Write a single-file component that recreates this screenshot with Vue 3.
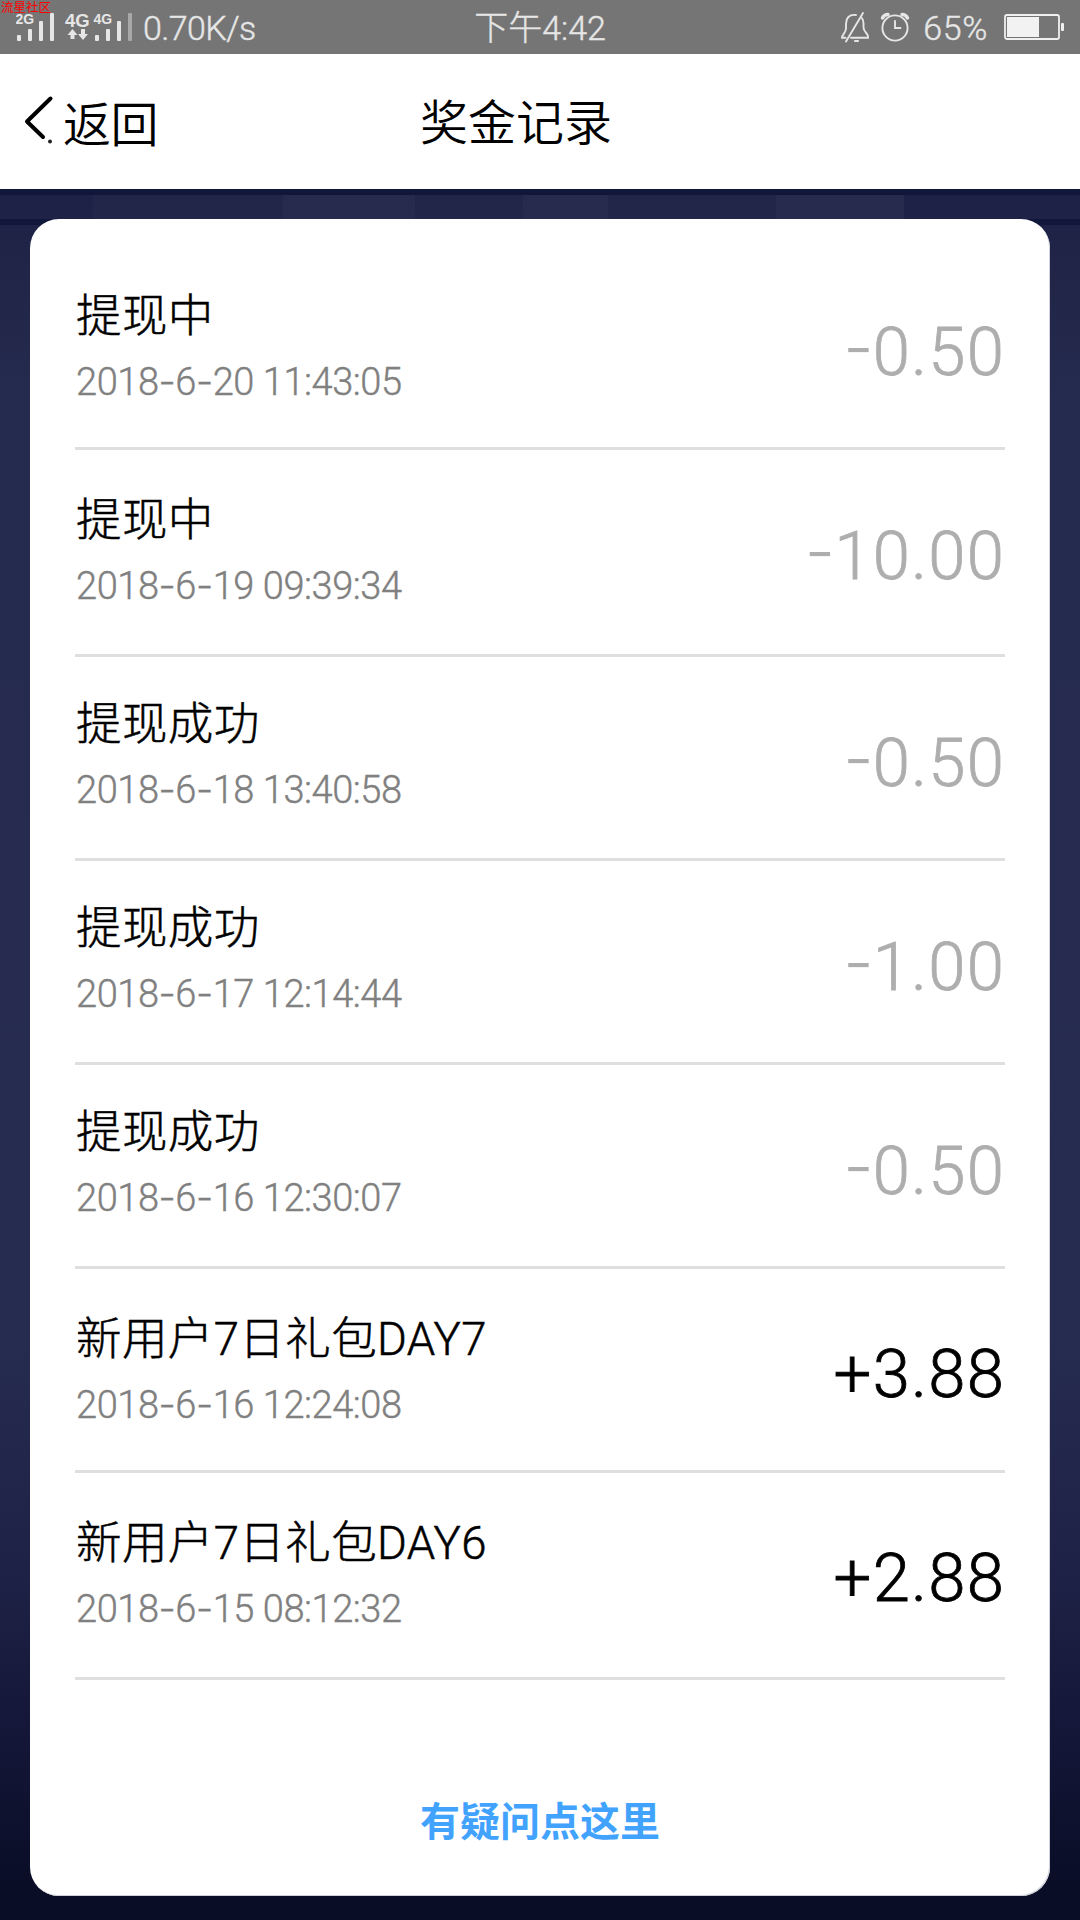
<script setup>
  import { ref } from 'vue';

  const records = ref([
    { title: '提现中', time: '2018-6-20 11:43:05', sign: '-', amount: '0.50' },
    { title: '提现中', time: '2018-6-19 09:39:34', sign: '-', amount: '10.00' },
    { title: '提现成功', time: '2018-6-18 13:40:58', sign: '-', amount: '0.50' },
    { title: '提现成功', time: '2018-6-17 12:14:44', sign: '-', amount: '1.00' },
    { title: '提现成功', time: '2018-6-16 12:30:07', sign: '-', amount: '0.50' },
    { title: '新用户7日礼包DAY7', time: '2018-6-16 12:24:08', sign: '+', amount: '3.88' },
    { title: '新用户7日礼包DAY6', time: '2018-6-15 08:12:32', sign: '+', amount: '2.88' }
  ])

  // keep the dashes as their own parts, they are set wider than the digits' font has them
  const timeParts = time => time.split(/(-)/)
</script>

<template>
  <div class="page">
    <div class="status">
      <span class="watermark">流星社区</span>
      <div class="status-left">
        <svg class="signal" width="120" height="54" viewBox="0 0 120 54" fill="#e6e6e6">
          <text x="-0.500" y="23.500" font-size="14" font-weight="bold">2G</text>
          <rect x="1" y="35" width="4" height="6" rx="1" />
          <rect x="12" y="29" width="4" height="12" rx="1" />
          <rect x="23" y="21" width="4" height="20" rx="1" />
          <rect x="34" y="13" width="4" height="28" rx="1" />
          <text x="49" y="27" font-size="18.500" font-weight="bold">4G</text>
          <path d="M56.500 29l5 6h-3v4h-4v-4h-3zM67 40l-5-6h3v-5h4v5h3z" />
          <text x="77.500" y="23.500" font-size="14" font-weight="bold">4G</text>
          <rect x="79" y="35" width="4" height="6" rx="1" />
          <rect x="90" y="29" width="4" height="12" rx="1" />
          <rect x="101" y="21" width="4" height="20" rx="1" />
          <rect x="112" y="13" width="4" height="28" rx="1" opacity="0.45" />
        </svg>
        <span class="speed">0.70K/s</span>
      </div>
      <span class="clock">下午4:42</span>
      <div class="status-right">
        <svg width="70" height="54" viewBox="0 0 70 54" fill="none" stroke="#e6e6e6" stroke-width="1.900" stroke-linecap="round">
          <path d="M18 15c-7-1-10 3.500-10 8.700v4.500c0 5-4 6-4 9.600h3.500M13 37.800h17v-1.500c0-3-4.500-4-4.500-9v-4c0-2-.6-3.800-1.500-5M25 13L8 41.500" transform="translate(-3 0)" />
          <path d="M14 41h3" stroke-width="2.200" />
          <circle cx="54" cy="28" r="12.600" />
          <path d="M54 21v7h5.500" />
          <path d="M41.500 18a6 6 0 0 1 5.500-3.500M61 14.500a6 6 0 0 1 5.500 3.500" stroke-width="3.500" />
        </svg>
        <span class="percent">65%</span>
        <svg width="62" height="54" viewBox="0 0 62 54">
          <rect x="1" y="15" width="54" height="24" rx="2" fill="none" stroke="#f0f0f0" stroke-width="1.800" />
          <rect x="3" y="17" width="32" height="20" fill="#f2f2f2" />
          <rect x="57" y="23" width="3" height="8" rx="1" fill="#f0f0f0" />
        </svg>
      </div>
    </div>

    <div class="header">
      <div class="back">
        <svg width="34" height="54" viewBox="0 0 34 54" fill="none" stroke="#000" stroke-linecap="round" stroke-linejoin="round">
          <path d="M27.500 3.500L4 26.500 20 42" stroke-width="4" />
          <circle cx="27" cy="46.500" r="2" fill="#222" stroke="none" />
        </svg>
        <span>返回</span>
      </div>
      <div class="title">奖金记录</div>
    </div>

    <div class="content">
      <div class="card">
        <div class="record" v-for="(item, idx) in records" :key="idx">
          <div class="info">
            <div class="name">{{ item.title }}</div>
            <div class="time"><span v-for="(part, i) in timeParts(item.time)" :key="i" :class="{ dash: part === '-' }">{{ part }}</span></div>
          </div>
          <div class="amount" :class="{ income: item.sign === '+' }"><span :class="{ dash: item.sign === '-' }">{{ item.sign }}</span>{{ item.amount }}</div>
        </div>
        <div class="help">有疑问点这里</div>
      </div>
    </div>
  </div>
</template>

<style>
body {
  margin: 0;
}
</style>

<style scoped>
.page {
  width: 1080px;
  height: 1920px;
  display: flex;
  flex-direction: column;
  overflow: hidden;
  font-family: Roboto, "Noto Sans CJK SC", sans-serif;
  font-weight: 300;
  color: #000;
}

.status {
  position: relative;
  height: 54px;
  display: grid;
  grid-template-columns: 1fr auto 1fr;
  background-color: #757575;
  color: #e6e6e6;
  font-size: 34px;
  line-height: 57px;
  -webkit-text-stroke: 0.4px;
}

.watermark {
  position: absolute;
  left: 1px;
  top: 0;
  font-size: 12.5px;
  line-height: 15px;
  font-weight: 400;
  color: #f00;
  -webkit-text-stroke: 0;
}

.status-left {
  display: flex;
  padding-left: 16px;
}

.signal {
  font-family: "Liberation Sans", sans-serif;
  -webkit-text-stroke: 0;
}

.speed {
  margin-left: 7px;
  letter-spacing: -0.6px;
}

.status-right {
  display: flex;
  justify-content: flex-end;
  padding-right: 14px;
}

.percent {
  margin: 0 16px 0 12px;
  letter-spacing: 0.6px;
}

.header {
  height: 135px;
  display: grid;
  grid-template-columns: 420px 1fr;
  align-items: center;
  background-color: #fff;
  font-size: 48px;
  line-height: 60px;
  font-weight: 350;
}

.back {
  display: flex;
  align-items: center;
  padding-left: 23px;
}

.back span {
  margin: 8px 0 0 6px;
  letter-spacing: -0.6px;
}

.title {
  margin-top: 4px;
}

.content {
  flex: 1;
  padding: 30px 30px 24px;
  /* dark rails under the header, then the night backdrop */
  background-image:
    linear-gradient(#11173a 0 6px, transparent 6px 30px, #11173a 30px 36px, transparent 36px),
    linear-gradient(90deg, transparent 0 93px, rgba(255, 255, 255, 0.02) 93px 283px, rgba(255, 255, 255, 0.04) 283px 415px, rgba(255, 255, 255, 0.02) 415px 523px, rgba(255, 255, 255, 0.04) 523px 608px, rgba(255, 255, 255, 0.02) 608px 776px, rgba(255, 255, 255, 0.04) 776px 904px, transparent 904px),
    linear-gradient(#1d2145 0, #252b4e 200px, #262b50 1150px, #1d2145 1400px, #15183a 1520px, #0a0d26 1700px);
  background-size: 100% 100%, 100% 30px, 100% 100%;
  background-repeat: no-repeat;
}

.card {
  box-sizing: border-box;
  height: 1677px;
  padding: 24px 45px 0;
  background-color: #fff;
  border-radius: 29px;
  box-shadow: inset -1px -1px #d0d1d8;
}

.record {
  box-sizing: border-box;
  height: 204px;
  display: flex;
  justify-content: space-between;
  border-bottom: 3px solid #dfdfdf;
}

.info {
  padding: 38px 0 0 1px;
}

.amount {
  padding-top: 65px;
  font-size: 67px;
  line-height: 80px;
  letter-spacing: 1.2px;
  color: #aeaeae;
  -webkit-text-stroke: 0.8px;
}

.record:nth-child(1),
.record:nth-child(2),
.record:nth-child(7) {
  height: 207px;
}

.record:nth-child(1) .info {
  padding-top: 44px;
}

.record:nth-child(2) .info,
.record:nth-child(6) .info,
.record:nth-child(7) .info {
  padding-top: 41px;
}

.record:nth-child(1) .amount {
  padding-top: 68px;
}

.name {
  font-size: 45.5px;
  line-height: 60px;
  letter-spacing: 0.4px;
  -webkit-text-stroke: 0.5px;
}

.time {
  margin-top: 6px;
  font-size: 38px;
  line-height: 56px;
  letter-spacing: -0.45px;
  color: #808080;
  -webkit-text-stroke: 0.4px;
}

.dash {
  font-family: Inter, sans-serif;
}

.amount .dash {
  position: relative;
  top: -4px;
  margin-right: -2px;
  -webkit-text-stroke: 0;
}

.income {
  color: #000;
}

.help {
  margin-top: 113px;
  text-align: center;
  font-size: 40px;
  line-height: 60px;
  font-weight: 700;
  color: #42a3ff;
}
</style>
